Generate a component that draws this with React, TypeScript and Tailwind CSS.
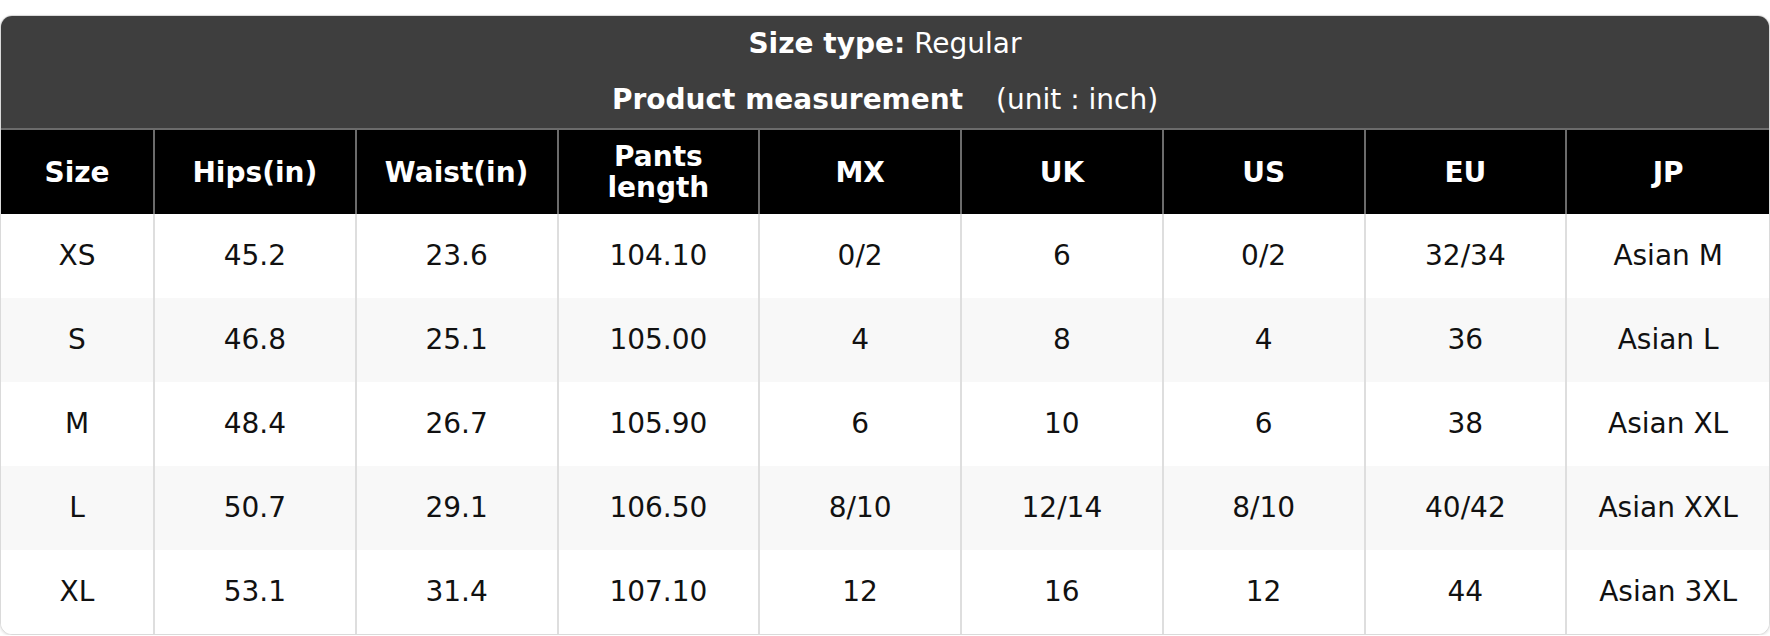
const columns = ["Size", "Hips(in)", "Waist(in)", "Pants length", "MX", "UK", "US", "EU", "JP"];

const rows = [
  ["XS", "45.2", "23.6", "104.10", "0/2", "6", "0/2", "32/34", "Asian M"],
  ["S", "46.8", "25.1", "105.00", "4", "8", "4", "36", "Asian L"],
  ["M", "48.4", "26.7", "105.90", "6", "10", "6", "38", "Asian XL"],
  ["L", "50.7", "29.1", "106.50", "8/10", "12/14", "8/10", "40/42", "Asian XXL"],
  ["XL", "53.1", "31.4", "107.10", "12", "16", "12", "44", "Asian 3XL"],
];

export default function App() {
  return (
    <div className="w-full bg-white pt-[15px] font-['DejaVu_Sans',sans-serif]">
      <div className="overflow-hidden rounded-[12px] border border-[#dadada] bg-white shadow-[0_1px_3px_rgba(0,0,0,0.12)]">
        <div className="bg-[#3e3e3e] text-center text-[28px] text-white border-b-2 border-[#6b6b6b]">
          <div className="flex h-[56px] items-center justify-center">
            <span className="font-bold">Size type:</span>
            <span className="ml-[9px]">Regular</span>
          </div>
          <div className="flex h-[56px] items-center justify-center">
            <span className="font-bold">Product measurement</span>
            <span className="ml-[33px]">(unit : inch)</span>
          </div>
        </div>
        <table className="w-full table-fixed border-separate border-spacing-0 text-[28px]">
          <colgroup>
            <col className="w-[154px]" />
            {columns.slice(1).map((c) => (
              <col key={c} />
            ))}
          </colgroup>
          <thead>
            <tr className="bg-black text-white">
              {columns.map((c, i) => (
                <th
                  key={c}
                  className={`h-[84px] px-2 text-center align-middle font-bold leading-[31px] ${
                    i < columns.length - 1 ? "border-r-2 border-[#6b6b6b]" : ""
                  }`}
                >
                  {c === "Pants length" ? (
                    <>
                      Pants
                      <br />
                      length
                    </>
                  ) : (
                    c
                  )}
                </th>
              ))}
            </tr>
          </thead>
          <tbody>
            {rows.map((r, ri) => (
              <tr key={r[0]} className={ri % 2 === 1 ? "bg-[#f8f8f8]" : "bg-white"}>
                {r.map((v, i) => (
                  <td
                    key={i}
                    className={`h-[84px] px-2 text-center align-middle text-[#111] ${
                      i < r.length - 1 ? "border-r-2 border-[#dedede]" : ""
                    }`}
                  >
                    {v}
                  </td>
                ))}
              </tr>
            ))}
          </tbody>
        </table>
      </div>
    </div>
  );
}
